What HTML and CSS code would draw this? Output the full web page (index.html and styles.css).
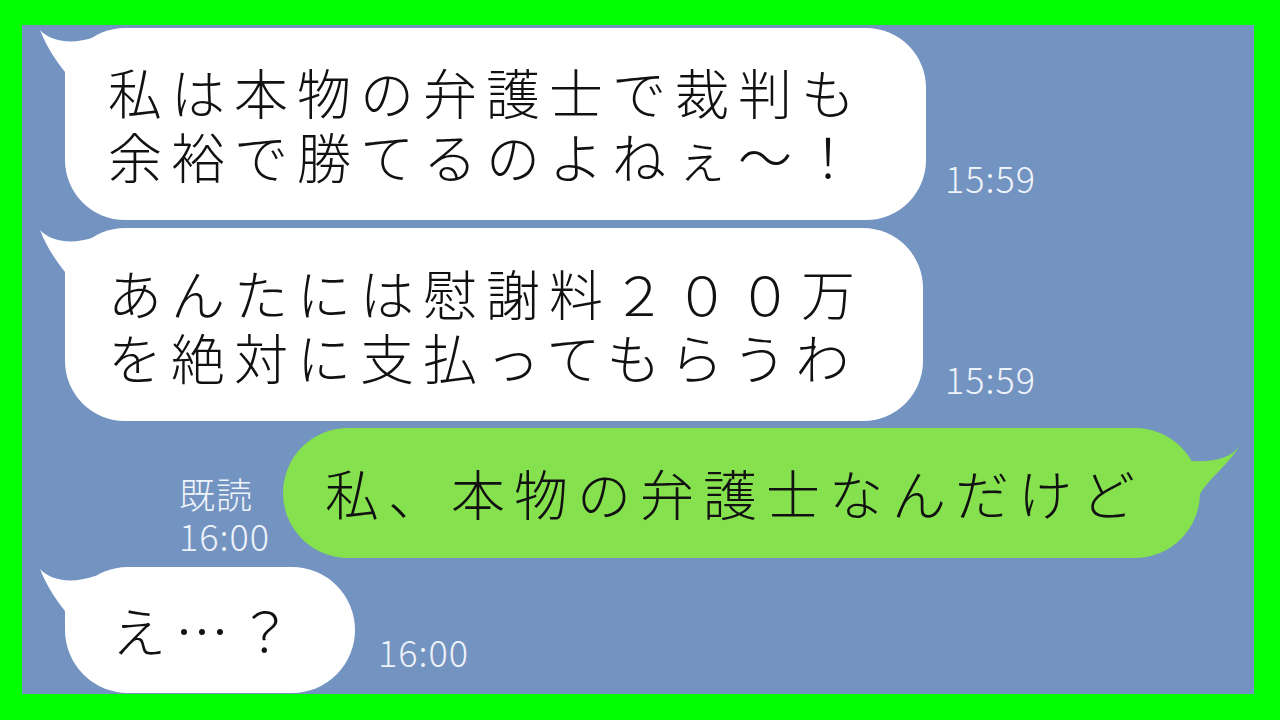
FILE: index.html
```html
<!DOCTYPE html>
<html lang="ja">
<head>
<meta charset="utf-8">
<title>chat</title>
<link rel="stylesheet" href="styles.css">
</head>
<body>
<div class="screen">
  <div class="row left r1">
    <div class="bubble white b1">
      <svg class="tail tail-l" width="80" height="80" viewBox="0 0 80 80"><path d="M1,2 C10,12 30,18 56,9 L70,60 L26,60 L26,44 C18,34 8,20 1,2 Z" fill="#fff"/></svg>
      <p class="msg">私は本物の弁護士で裁判も</p>
      <p class="msg">余裕で勝てるのよねぇ～！</p>
    </div>
    <div class="time t1">15:59</div>
  </div>
  <div class="row left r2">
    <div class="bubble white b2">
      <svg class="tail tail-l" width="80" height="80" viewBox="0 0 80 80"><path d="M1,2 C10,12 30,18 56,9 L70,60 L26,60 L26,44 C18,34 8,20 1,2 Z" fill="#fff"/></svg>
      <p class="msg">あんたには慰謝料２００万</p>
      <p class="msg">を絶対に支払ってもらうわ</p>
    </div>
    <div class="time t2">15:59</div>
  </div>
  <div class="row right r3">
    <div class="read">
      <div>既読</div>
      <div>16:00</div>
    </div>
    <div class="bubble green b3">
      <svg class="tail tail-r" width="80" height="80" viewBox="0 0 80 80"><path d="M70,17 C62,30 45,34 22,33 L0,60 L0,80 L28,70 C36,52 58,38 70,17 Z" fill="#86e14e"/></svg>
      <p class="msg">私、本物の弁護士なんだけど</p>
    </div>
  </div>
  <div class="row left r4">
    <div class="bubble white b4">
      <svg class="tail tail-l" width="80" height="80" viewBox="0 0 80 80"><path d="M1,2 C10,12 30,18 56,9 L70,60 L26,60 L26,44 C18,34 8,20 1,2 Z" fill="#fff"/></svg>
      <p class="msg">え…？</p>
    </div>
    <div class="time t4">16:00</div>
  </div>
</div>
</body>
</html>
```

FILE: styles.css
```css
html, body {
  margin: 0;
  padding: 0;
}
body {
  background: #00ff00;
  width: 1280px;
  height: 720px;
  overflow: hidden;
  font-family: "Noto Sans CJK JP", "Noto Sans", sans-serif;
}
.screen {
  margin: 25px 0 0 22px;
  width: 1232px;
  height: 669px;
  background: #7393c1;
  overflow: hidden;
  display: flex;
  flex-direction: column;
}
.row {
  display: flex;
  align-items: flex-end;
}
.row.left {
  padding-left: 43px;
}
.row.right {
  justify-content: flex-end;
  padding-right: 54px;
}
.r1 { margin-top: 3px; }
.r2 { margin-top: 8px; }
.r3 { margin-top: 7px; }
.r4 { margin-top: 9px; }

.bubble {
  position: relative;
  box-sizing: border-box;
  display: flex;
  flex-direction: column;
  justify-content: center;
}
.white { background: #ffffff; }
.green { background: #86e14e; }

.msg {
  margin: 0;
  font-size: 54px;
  font-weight: 300;
  line-height: 64px;
  letter-spacing: 9px;
  color: #111111;
  white-space: nowrap;
}

.b1 {
  width: 861px;
  height: 192px;
  border-radius: 60px;
  padding-left: 43px;
}
.b2 {
  width: 858px;
  height: 193px;
  border-radius: 60px;
  padding-left: 43px;
}
.b3 {
  width: 917px;
  height: 130px;
  border-radius: 65px;
  padding-left: 42px;
}
.b4 {
  width: 290px;
  height: 126px;
  border-radius: 63px;
  padding-left: 47px;
}

.tail {
  position: absolute;
  top: 0;
}
.tail-l {
  left: -26px;
}
.tail-r {
  right: -50px;
}

.time, .read {
  color: #eef2f9;
  font-size: 36px;
  font-weight: 300;
  line-height: 42px;
  letter-spacing: 1px;
  white-space: nowrap;
}
.t1 { margin-left: 19px; margin-bottom: 22px; }
.t2 { margin-left: 22px; margin-bottom: 22px; }
.t4 { margin-left: 23px; margin-bottom: 21px; }
.read {
  margin-right: 13px;
  margin-bottom: 2px;
  text-align: left;
}
```
